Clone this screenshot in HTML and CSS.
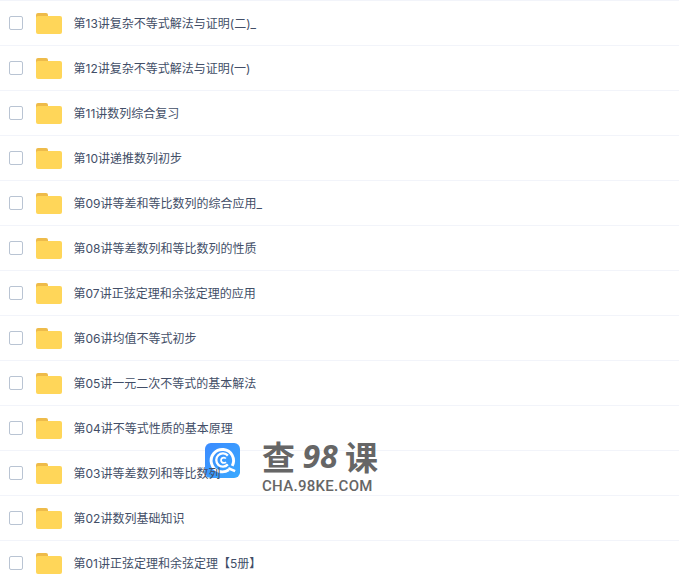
FILE: index.html
```html
<!DOCTYPE html>
<html lang="zh-CN">
<head>
  <meta charset="UTF-8">
  <meta name="viewport" content="width=device-width, initial-scale=1.0">
  <title>文件列表</title>
  <link rel="stylesheet" href="styles.css">
</head>
<body>
  <svg width="0" height="0" class="defs">
    <symbol id="folder" viewBox="0 0 26 21">
      <path d="M0 2 Q0 0 2 0 H10 Q12 0 12 2 V5 H0Z" fill="#eebb4a"/>
      <path d="M0 5 Q0 3 2 3 H24 Q26 3 26 5 V19 Q26 21 24 21 H2 Q0 21 0 19Z" fill="#ffd659"/>
    </symbol>
  </svg>
  <ul class="file-list">
    <li class="file-row"><span class="check"></span><svg class="folder"><use href="#folder"/></svg><span class="file-name">第13讲复杂不等式解法与证明(二)_</span></li>
    <li class="file-row"><span class="check"></span><svg class="folder"><use href="#folder"/></svg><span class="file-name">第12讲复杂不等式解法与证明(一)</span></li>
    <li class="file-row"><span class="check"></span><svg class="folder"><use href="#folder"/></svg><span class="file-name">第11讲数列综合复习</span></li>
    <li class="file-row"><span class="check"></span><svg class="folder"><use href="#folder"/></svg><span class="file-name">第10讲递推数列初步</span></li>
    <li class="file-row"><span class="check"></span><svg class="folder"><use href="#folder"/></svg><span class="file-name">第09讲等差和等比数列的综合应用_</span></li>
    <li class="file-row"><span class="check"></span><svg class="folder"><use href="#folder"/></svg><span class="file-name">第08讲等差数列和等比数列的性质</span></li>
    <li class="file-row"><span class="check"></span><svg class="folder"><use href="#folder"/></svg><span class="file-name">第07讲正弦定理和余弦定理的应用</span></li>
    <li class="file-row"><span class="check"></span><svg class="folder"><use href="#folder"/></svg><span class="file-name">第06讲均值不等式初步</span></li>
    <li class="file-row"><span class="check"></span><svg class="folder"><use href="#folder"/></svg><span class="file-name">第05讲一元二次不等式的基本解法</span></li>
    <li class="file-row"><span class="check"></span><svg class="folder"><use href="#folder"/></svg><span class="file-name">第04讲不等式性质的基本原理</span></li>
    <li class="file-row"><span class="check"></span><svg class="folder"><use href="#folder"/></svg><span class="file-name">第03讲等差数列和等比数列</span></li>
    <li class="file-row"><span class="check"></span><svg class="folder"><use href="#folder"/></svg><span class="file-name">第02讲数列基础知识</span></li>
    <li class="file-row"><span class="check"></span><svg class="folder"><use href="#folder"/></svg><span class="file-name">第01讲正弦定理和余弦定理【5册】</span></li>
  </ul>

  <div class="watermark">
    <svg class="wm-logo" viewBox="0 0 36 36">
      <defs>
        <linearGradient id="wm-bg" x1="0" y1="0" x2="1" y2="1">
          <stop offset="0" stop-color="#3c8bff"/>
          <stop offset="1" stop-color="#39a9ff"/>
        </linearGradient>
      </defs>
      <rect width="36" height="36" rx="6" fill="url(#wm-bg)"/>
      <path d="M24.5 27.5 A11.5 11.5 0 1 1 28 23.5" fill="none" stroke="#fff" stroke-width="3"/>
      <path d="M23.5 13 A6.8 6.8 0 1 0 23.5 22" fill="none" stroke="#fff" stroke-width="2.4"/>
      <path d="M21.5 16 A2.8 2.8 0 1 0 21.5 19.5" fill="none" stroke="#fff" stroke-width="1.8"/>
      <path d="M24 26 L31 29" stroke="#fff" stroke-width="2.6"/>
    </svg>
    <div class="wm-text">
      <div class="wm-title"><span>查</span><span class="wm-num">98</span><span>课</span></div>
      <div class="wm-url">CHA.98KE.COM</div>
    </div>
  </div>
</body>
</html>
```

FILE: styles.css
```css
html, body {
  margin: 0;
  padding: 0;
  height: 585px;
  overflow: hidden;
  background-color: #fff;
}

body {
  font-family: Inter, "Noto Sans CJK SC", sans-serif;
  font-size: 12px;
  color: #424e67;
  position: relative;
}

.defs {
  position: absolute;
}

.file-list {
  list-style: none;
  margin: 0;
  padding: 0;
  border-top: 1px solid #f2f4fa;
}

.file-row {
  display: flex;
  align-items: center;
  box-sizing: border-box;
  height: 45px;
  padding-left: 9px;
  border-bottom: 1px solid #f2f4fa;
}

.check {
  box-sizing: border-box;
  width: 14px;
  height: 14px;
  border: 1px solid #b9c4d3;
  border-radius: 2px;
  margin-right: 13px;
}

.folder {
  width: 26px;
  height: 21px;
  margin: 1px 12px 0 0;
}

/* names stay readable over the watermark logo */
.file-name {
  position: relative;
  z-index: 2;
  white-space: nowrap;
  line-height: 20px;
  margin: 1px 0 0 -0.5px;
}

/* watermark */
.watermark {
  position: absolute;
  z-index: 1;
  left: 205px;
  top: 437px;
  display: flex;
  gap: 22px;
}

.wm-logo {
  width: 35px;
  height: 35px;
  margin-top: 6px;
}

.wm-text {
  color: #666;
  font-weight: 700;
}

.wm-title {
  display: flex;
  justify-content: space-between;
  align-items: center;
  width: 116px;
  font-family: "Noto Sans CJK SC", sans-serif;
  font-size: 33px;
  line-height: 38px;
}

.wm-num {
  font-family: "Open Sans", sans-serif;
  font-style: italic;
  font-size: 32px;
}

.wm-url {
  font-family: Roboto, sans-serif;
  font-size: 15px;
  font-weight: 500;
  line-height: 16px;
  letter-spacing: 0.3px;
  margin-top: 3px;
}
```
